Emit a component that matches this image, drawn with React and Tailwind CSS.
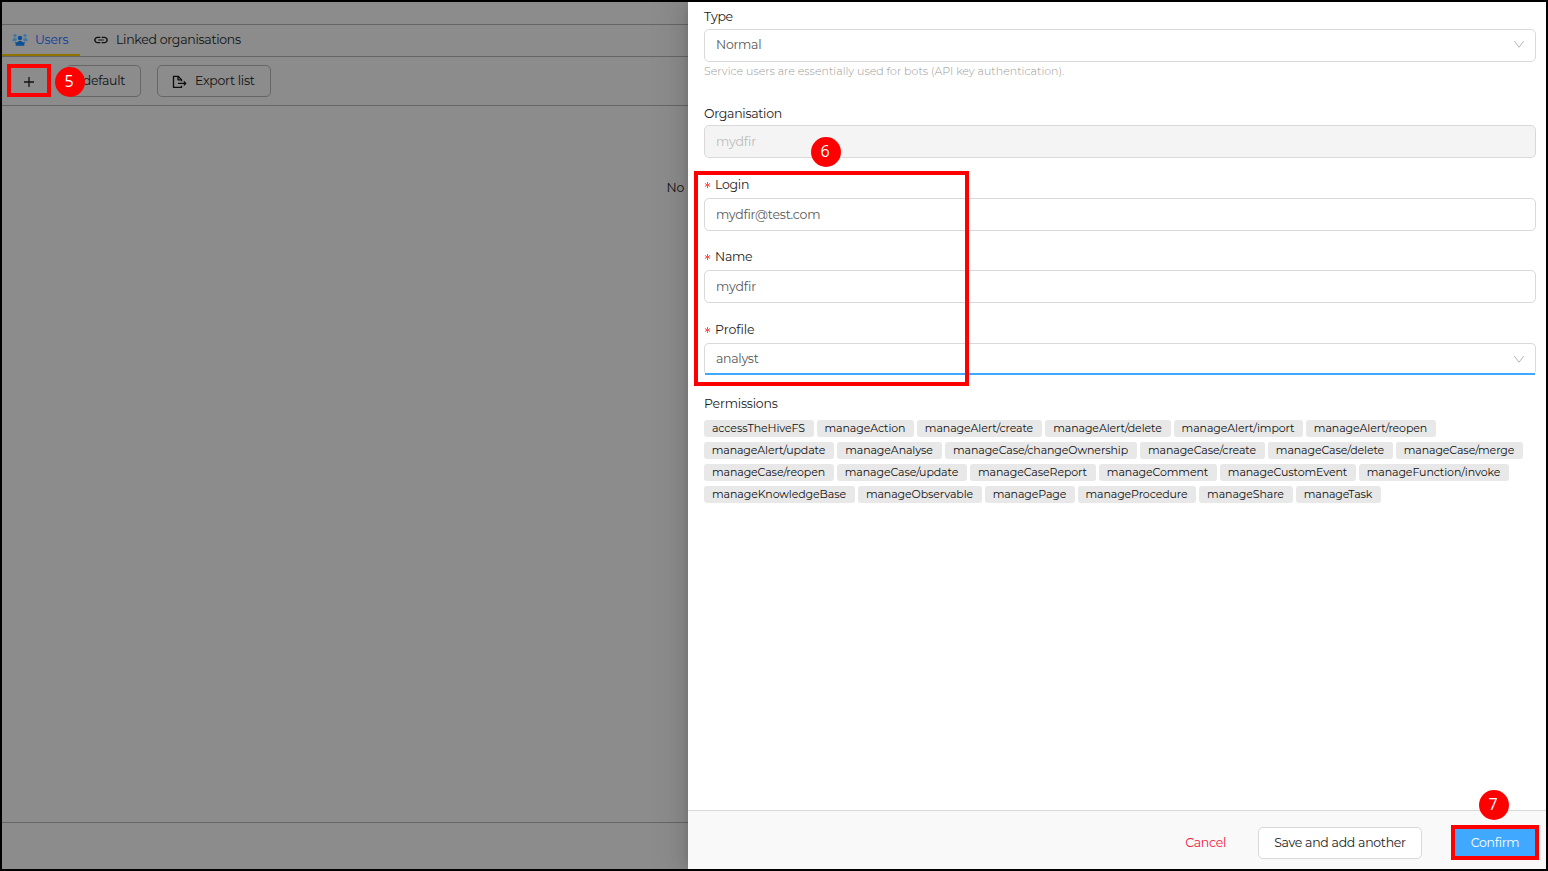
const fieldBase =
  "flex h-[33px] w-full items-center justify-between rounded-[5px] border border-[#d9d9d9] px-[11px] text-[#595959]";

const permissionRows = [
  [
    ["accessTheHiveFS", "w-[110px]"],
    ["manageAction", "w-[97px]"],
    ["manageAlert/create", "w-[125px]"],
    ["manageAlert/delete", "w-[126px]"],
    ["manageAlert/import", "w-[129px]"],
    ["manageAlert/reopen", "w-[130px]"],
  ],
  [
    ["manageAlert/update", "w-[130px]"],
    ["manageAnalyse", "w-[105px]"],
    ["manageCase/changeOwnership", "w-[192px]"],
    ["manageCase/create", "w-[125px]"],
    ["manageCase/delete", "w-[125px]"],
    ["manageCase/merge", "w-[127px]"],
  ],
  [
    ["manageCase/reopen", "w-[130px]"],
    ["manageCase/update", "w-[130px]"],
    ["manageCaseReport", "w-[126px]"],
    ["manageComment", "w-[118px]"],
    ["manageCustomEvent", "w-[136px]"],
    ["manageFunction/invoke", "w-[150px]"],
  ],
  [
    ["manageKnowledgeBase", "w-[151px]"],
    ["manageObservable", "w-[124px]"],
    ["managePage", "w-[90px]"],
    ["manageProcedure", "w-[118px]"],
    ["manageShare", "w-[94px]"],
    ["manageTask", "w-[85px]"],
  ],
];

function TeamIcon() {
  return (
    <svg width="16" height="14" viewBox="0 0 16 14" aria-hidden="true">
      <g fill="#3f78a8">
        <circle cx="3" cy="2.6" r="1.7" />
        <circle cx="13" cy="2.6" r="1.7" />
        <path d="M.3 8.2c0-2 1-3.2 2.7-3.2 1 0 1.6.4 2 .9L4 8.2z" />
        <path d="M15.7 8.2c0-2-1-3.2-2.7-3.2-1 0-1.6.4-2 .9l1 2.3z" />
      </g>
      <g fill="#0b4f94">
        <circle cx="8" cy="5" r="2.3" />
        <path d="M2.7 9.3h2.5c.8-.9 1.700-1.300 2.800-1.300s2 .4 2.800 1.300h2.500l-1 1.200v2.300H3.700v-2.300z" />
      </g>
    </svg>
  );
}

function LinkIcon() {
  return (
    <svg width="16" height="16" viewBox="0 0 24 24" fill="#111" aria-hidden="true">
      <path d="M3.900 12c0-1.710 1.390-3.100 3.100-3.100h4V7H7c-2.900 0-5.300 2.200-5.300 5s2.400 5 5.300 5h4v-1.900H7c-1.710 0-3.100-1.390-3.100-3.100zM8 12.800h8v-1.700H8v1.700zm9-5.800h-4v1.900h4c1.710 0 3.100 1.390 3.100 3.100s-1.390 3.100-3.100 3.100h-4V17h4c2.900 0 5.300-2.200 5.300-5s-2.400-5-5.300-5z" />
    </svg>
  );
}

function ExportIcon() {
  return (
    <svg width="15" height="14" viewBox="0 0 15 14" fill="none" stroke="#0d0d0d" strokeWidth="1.300" strokeLinejoin="round" aria-hidden="true">
      <path d="M9.500 10.700v1.700h-8V1.300h4.700l3.300 3.300v1.600M6 1.300v3.500h3.500" />
      <path d="M6 8.400h7.800M11.800 6.400l2 2-2 2" />
    </svg>
  );
}

function Chevron() {
  return (
    <svg className="-mr-[1px] mt-px" width="12" height="9" viewBox="0 0 12 9" fill="none" stroke="#b8b8b8" strokeWidth="1" aria-hidden="true">
      <path d="M1.300 1l4.700 6.300L10.700 1" />
    </svg>
  );
}

function Label({ children, required, className = "" }) {
  return (
    <div className={`flex h-[20px] items-center text-[#1c1c1c] ${className}`}>
      {required && (
        <svg className="mr-[4px] mt-px" width="7" height="8" viewBox="0 0 7 8" stroke="#ff4d4f" strokeWidth="1" aria-hidden="true">
          <path d="M3.500 1v6M.9 2.500l5.200 3M6.100 2.500l-5.200 3" />
        </svg>
      )}
      <span className="mt-[2px]">{children}</span>
    </div>
  );
}

function Badge({ children, className }) {
  return (
    <div className={`absolute flex size-[30px] items-center justify-center rounded-full bg-[#ff0000] pr-px pb-[2px] font-['Open_Sans',sans-serif] text-[16px] leading-none font-medium tracking-normal text-white ${className}`}>
      {children}
    </div>
  );
}

function OrganisationPage() {
  return (
    <div className="flex w-[686px] shrink-0 flex-col overflow-hidden bg-[#8c8c8c] text-[#111]">
      <div className="h-[23px] shrink-0 border-b border-[#666]" />
      <div className="flex h-[32px] shrink-0 border-b border-[#666]">
        <div className="flex h-[31px] w-[78px] items-center border-b-2 border-[#8f7200] pl-[10px] text-[#0b3c9c]">
          <TeamIcon />
          <span className="ml-[7px]">Users</span>
        </div>
        <div className="flex h-[30px] items-center pl-[13px]">
          <LinkIcon />
          <span className="mb-px ml-[7px]">Linked organisations</span>
        </div>
      </div>
      <div className="flex h-[49px] shrink-0 items-center border-b border-[#666] pl-[6px]">
        <div className="flex h-[33px] w-[42px] items-center justify-center pt-[2px]">
          <svg width="10" height="10" viewBox="0 0 10 10" stroke="#111" strokeWidth="1.300" aria-hidden="true">
            <path d="M5 0v10M0 5h10" />
          </svg>
        </div>
        <div className="ml-[16px] flex h-[32px] w-[75px] items-center justify-end rounded-[5px] border border-[#666] pr-[15px]">
          default
        </div>
        <div className="ml-[16px] flex h-[32px] w-[114px] items-center rounded-[5px] border border-[#666] pl-[14px]">
          <span className="mt-px"><ExportIcon /></span>
          <span className="ml-[8px]">Export list</span>
        </div>
      </div>
      <div className="flex grow justify-end pt-[72px] pr-[4px]">
        <span className="h-[20px] leading-[20px]">No</span>
      </div>
      <div className="h-[47px] shrink-0 border-t border-[#666]" />
    </div>
  );
}

function UserDrawer() {
  return (
    <div className="relative flex grow flex-col bg-white shadow-[-6px_0_16px_0_rgba(0,0,0,0.08),-3px_0_6px_-4px_rgba(0,0,0,0.12),-9px_0_28px_8px_rgba(0,0,0,0.05)]">
      <div className="flex grow flex-col pt-[4px] pr-[10px] pl-4">
        <Label>Type</Label>
        <div className={`mt-[3px] bg-white pb-[3px] ${fieldBase}`}>
          <span className="mt-[2px]">Normal</span>
          <Chevron />
        </div>
        <div className="mt-[1px] h-[16px] text-[11px] leading-[16px] font-light tracking-[0.02px] text-[#999]">
          Service users are essentially used for bots (API key authentication).
        </div>
        <Label className="mt-[24px]">Organisation</Label>
        <div className="mt-[2px] flex h-[33px] items-center rounded-[5px] border border-[#d9d9d9] bg-[#f4f4f4] px-[11px] pt-px tracking-[-0.1px] text-[#bdbdbd]">
          mydfir
        </div>
        <Label required className="mt-[16px]">Login</Label>
        <div className={`mt-[4px] bg-white tracking-[-0.22px] ${fieldBase}`}>mydfir@test.com</div>
        <Label required className="mt-[15px]">Name</Label>
        <div className={`mt-[4px] bg-white tracking-[-0.1px] ${fieldBase}`}>mydfir</div>
        <Label required className="mt-[16px] tracking-[-0.05px]">Profile</Label>
        <div className="mt-[4px] h-[32px] w-full rounded-[5px] border border-b-0 border-[#d9d9d9]">
          <div className="flex h-[31px] items-center justify-between border-b-2 border-[#40a9ff] px-[11px] text-[#595959]">
            <span className="mt-px">analyst</span>
            <Chevron />
          </div>
        </div>
        <Label className="mt-[18px] tracking-[-0.2px]">Permissions</Label>
        <div className="mt-[7px] flex flex-col gap-[5px] text-[11px] leading-[16px] tracking-[-0.1px] text-[#111]">
          {permissionRows.map((row) => (
            <div key={row[0][0]} className="flex gap-[3px]">
              {row.map(([name, width]) => (
                <span key={name} className={`h-[17px] rounded-[3px] bg-[#e8e8e8] pr-px text-center whitespace-nowrap ${width}`}>
                  {name}
                </span>
              ))}
            </div>
          ))}
        </div>
      </div>
      <div className="flex h-[59px] shrink-0 items-center justify-end border-t border-[#d9d9d9] bg-[#f9f9f9] pt-[5px] pr-[7px]">
        <button className="mr-[32px] text-[#f5153d]">Cancel</button>
        <button className="mr-[29px] h-[32px] w-[164px] rounded-[5px] border border-[#d9d9d9] bg-white text-[#1c1c1c]">
          Save and add another
        </button>
        <button className="h-[35px] w-[88px] border-4 border-[#ff0000] bg-[#40a9ff] text-white">Confirm</button>
      </div>
    </div>
  );
}

export default function App() {
  return (
    <div className="relative flex h-[871px] w-[1548px] overflow-hidden border-2 border-black font-['Montserrat','Inter',sans-serif] text-[12.5px] leading-[20px] font-normal tracking-[-0.28px]">
      <OrganisationPage />
      <UserDrawer />
      <div className="absolute top-[62px] left-[5px] h-[33px] w-[44px] border-4 border-[#ff0000]" />
      <Badge className="top-[65px] left-[52.500px]">5</Badge>
      <div className="absolute top-[169px] left-[692px] h-[215px] w-[275px] border-4 border-[#ff0000]" />
      <Badge className="top-[135px] left-[808.500px]">6</Badge>
      <Badge className="top-[788px] left-[1476.500px]">7</Badge>
    </div>
  );
}
